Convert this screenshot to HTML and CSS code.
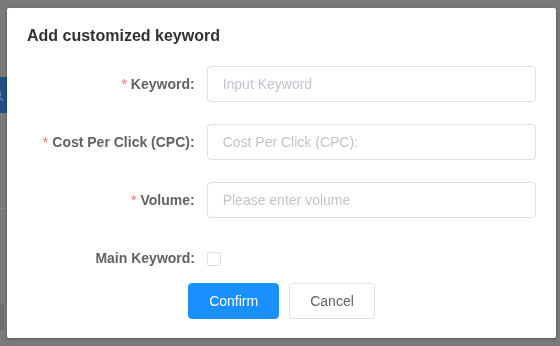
FILE: index.html
```html
<!DOCTYPE html>
<html lang="en">
<head>
  <meta charset="UTF-8">
  <meta name="viewport" content="width=device-width, initial-scale=1.0">
  <title>Add customized keyword</title>
  <link rel="stylesheet" href="styles.css">
</head>
<body>

  <!-- page behind the dialog -->
  <div class="page">
    <div class="search-bar">
      <button class="search-btn" type="button">
        <svg width="14" height="14" viewBox="0 0 14 14"><circle cx="6" cy="6" r="4.5" fill="none" stroke="#5d84ad" stroke-width="1.5"/><path d="M9.5 9.5 L13 13" stroke="#5d84ad" stroke-width="1.5"/></svg>
      </button>
    </div>
    <div class="page-line"></div>
    <div class="page-block"></div>
  </div>

  <div class="mask">
    <div class="dialog">
      <div class="dialog-header">
        <span class="dialog-title">Add customized keyword</span>
      </div>

      <form class="form">
        <div class="form-item">
          <label class="form-label required">Keyword:</label>
          <input class="form-input" type="text" placeholder="Input Keyword">
        </div>
        <div class="form-item">
          <label class="form-label required">Cost Per Click (CPC):</label>
          <input class="form-input" type="text" placeholder="Cost Per Click (CPC):">
        </div>
        <div class="form-item">
          <label class="form-label required">Volume:</label>
          <input class="form-input" type="text" placeholder="Please enter volume">
        </div>
        <div class="form-item">
          <label class="form-label">Main Keyword:</label>
          <span class="checkbox"></span>
        </div>

        <div class="form-actions">
          <button class="btn btn-primary" type="button">Confirm</button>
          <button class="btn" type="button">Cancel</button>
        </div>
      </form>
    </div>
  </div>

</body>
</html>
```

FILE: styles.css
```css
body {
  font-family: "Liberation Sans", Arial, sans-serif;
  margin: 0;
  background-color: #7a7a7a;
  height: 346px;
  overflow: hidden;
}

/* page under the mask */
.page {
  padding-top: 77px;
}

.search-bar {
  display: flex;
}

.search-btn {
  width: 40px;
  height: 36px;
  margin-left: -32px;
  border: none;
  padding: 0 0 0 22px;
  background-color: #1f4f84;
  display: flex;
  align-items: center;
}

.page-line {
  margin-top: 95px;
  width: 7px;
  height: 1px;
  background-color: #858585;
}

.page-block {
  margin-top: 95px;
  width: 4px;
  height: 26px;
  background-color: #6e6e6e;
}

/* dialog */
.mask {
  position: fixed;
  top: 0;
  left: 0;
  right: 0;
  bottom: 0;
}

.dialog {
  margin: 8px 0 0 7px;
  width: 549px;
  height: 330px;
  box-sizing: border-box;
  background-color: #fff;
  border-radius: 2px;
  box-shadow: 0 1px 3px rgba(0, 0, 0, 0.3);
  padding: 16px 20px 0;
}

.dialog-header {
  height: 24px;
  line-height: 24px;
}

.dialog-title {
  font-size: 16px;
  font-weight: bold;
  color: #303133;
}

.form {
  margin: 18px 0 0;
}

.form-item {
  display: flex;
  align-items: center;
  height: 36px;
  margin-bottom: 22px;
}

.form-label {
  width: 180px;
  box-sizing: border-box;
  padding-right: 12px;
  text-align: right;
  font-size: 14px;
  font-weight: bold;
  line-height: 36px;
  color: #606266;
}

.form-label.required::before {
  content: "*";
  color: #f56c6c;
  font-weight: normal;
  margin-right: 4px;
}

.form-input {
  width: 330px;
  height: 36px;
  box-sizing: border-box;
  border: 1px solid #dcdfe6;
  border-radius: 4px;
  padding: 0 15px;
  font-family: inherit;
  font-size: 14px;
  color: #606266;
  outline: none;
}

.form-input::placeholder {
  color: #c0c4cc;
}

.checkbox {
  width: 14px;
  height: 14px;
  box-sizing: border-box;
  border: 1px solid #dcdfe6;
  border-radius: 2px;
  background-color: #fff;
  margin-top: 1px;
}

.form-actions {
  display: flex;
  justify-content: center;
  gap: 10px;
  margin-top: -15px;
}

.btn {
  height: 36px;
  padding: 0 20px;
  font-family: inherit;
  font-size: 14px;
  color: #606266;
  background-color: #fff;
  border: 1px solid #dcdfe6;
  border-radius: 4px;
}

.btn-primary {
  color: #fff;
  background-color: #1890ff;
  border-color: #1890ff;
}
```
